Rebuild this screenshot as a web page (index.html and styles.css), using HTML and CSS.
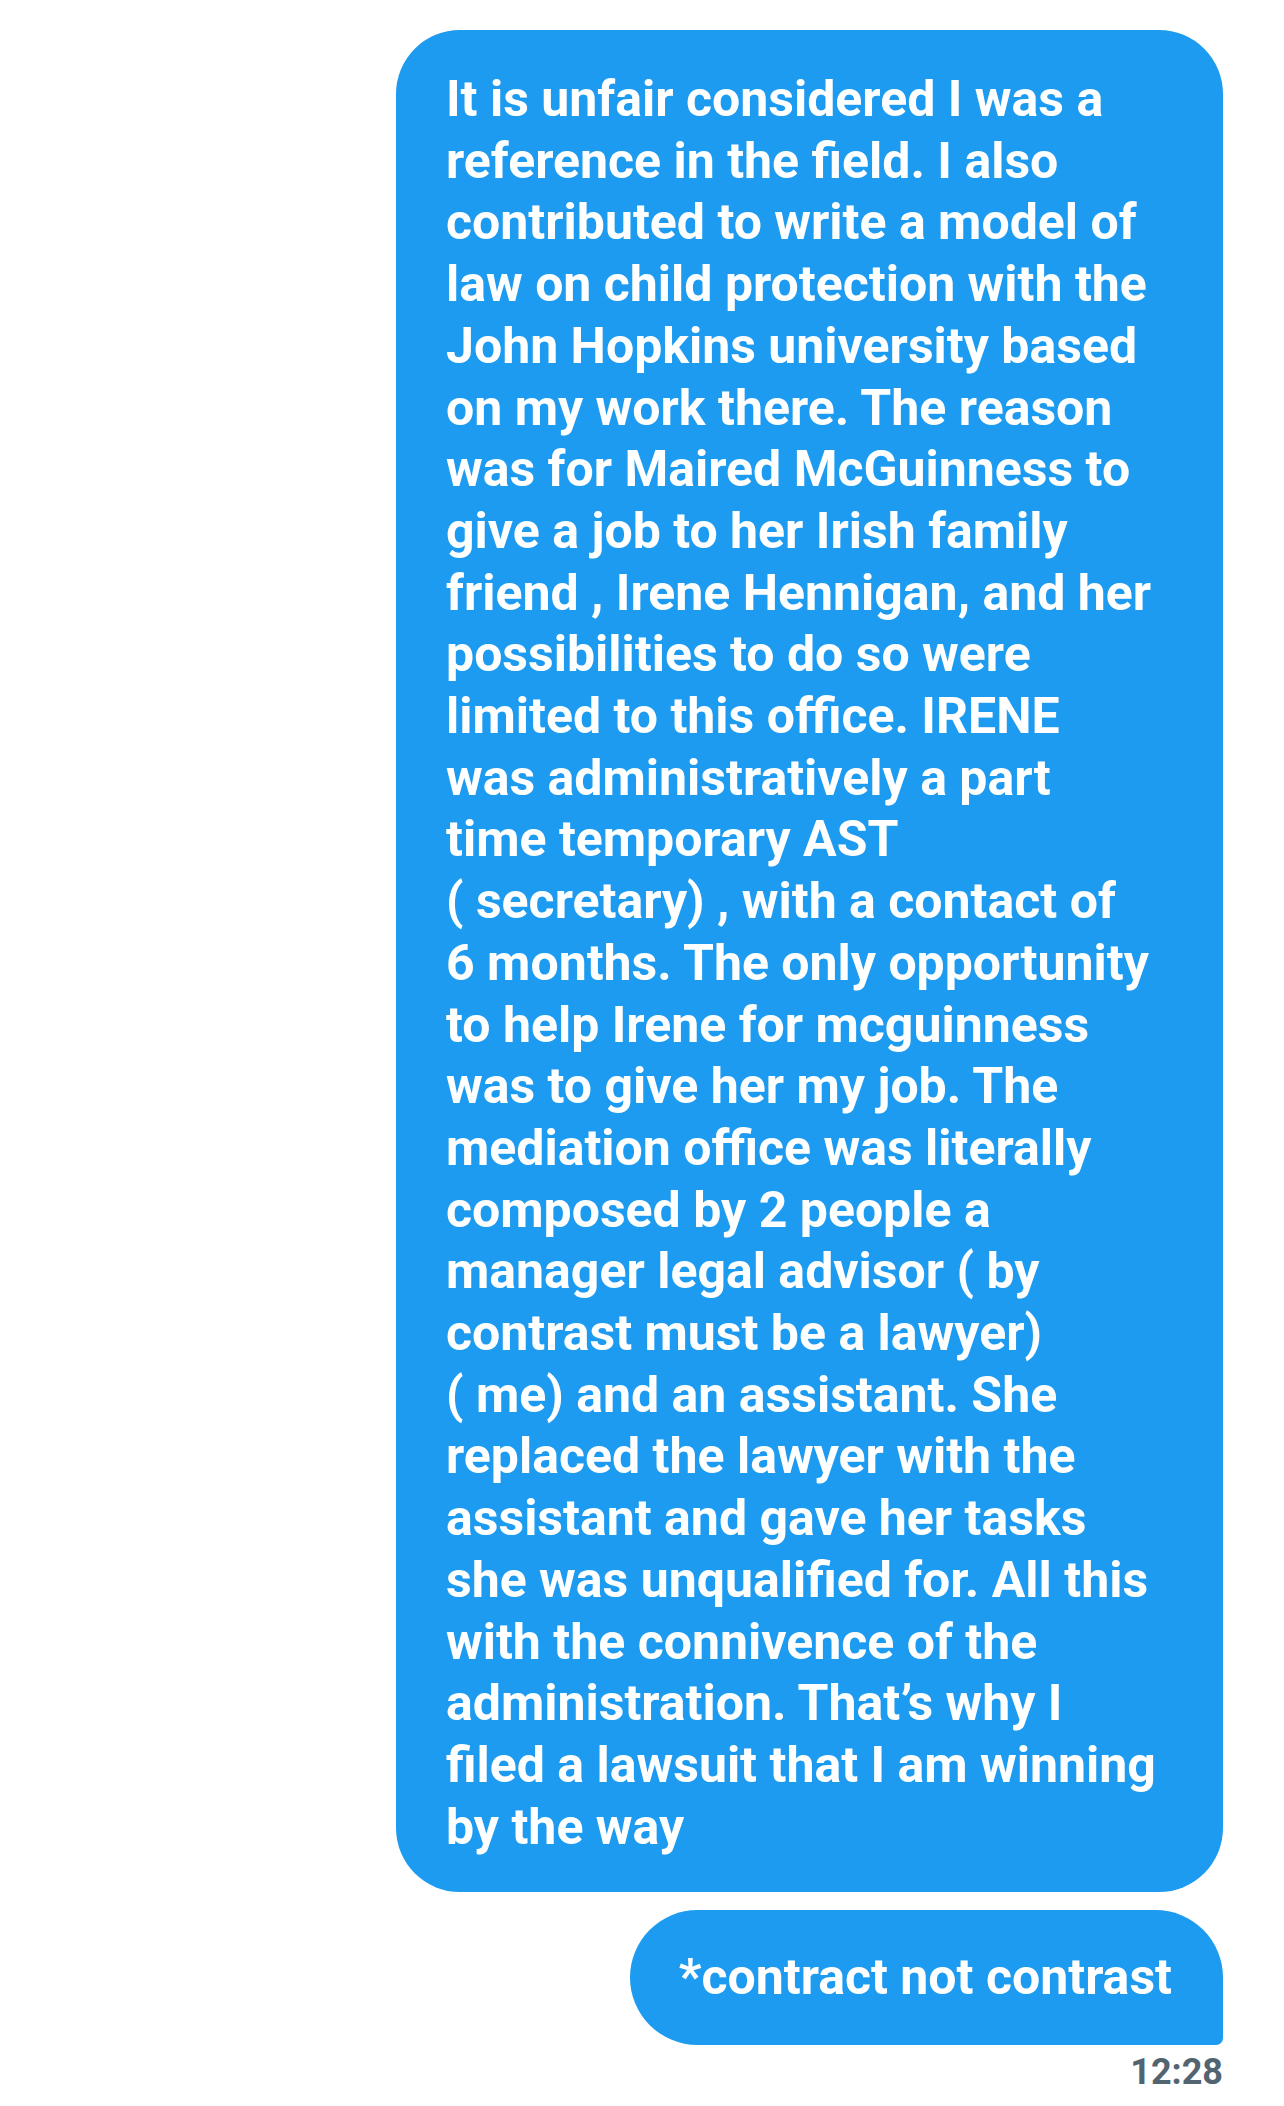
FILE: index.html
```html
<!DOCTYPE html>
<html>
<head>
<meta charset="utf-8">
<link rel="stylesheet" href="styles.css">
</head>
<body>
<div class="thread">
  <div class="bubble bubble-main">It is unfair considered I was a<br>reference in the field. I also<br>contributed to write a model of<br>law on child protection with the<br>John Hopkins university based<br>on my work there. The reason<br>was for Maired McGuinness to<br>give a job to her Irish family<br>friend , Irene Hennigan, and her<br>possibilities to do so were<br>limited to this office. IRENE<br>was administratively a part<br>time temporary AST<br>( secretary) , with a contact of<br>6 months. The only opportunity<br>to help Irene for mcguinness<br>was to give her my job. The<br>mediation office was literally<br>composed by 2 people a<br>manager legal advisor ( by<br>contrast must be a lawyer)<br>( me) and an assistant. She<br>replaced the lawyer with the<br>assistant and gave her tasks<br>she was unqualified for. All this<br>with the connivence of the<br>administration. That’s why I<br>filed a lawsuit that I am winning<br>by the way</div>
  <div class="bubble bubble-last">*contract not contrast</div>
  <div class="time">12:28</div>
</div>
</body>
</html>
```
FILE: styles.css
```css
html, body {
  margin: 0;
  padding: 0;
  background: #ffffff;
}
.thread {
  display: flex;
  flex-direction: column;
  align-items: flex-end;
  padding: 30px 61px 0 0;
  font-family: Roboto, "Noto Sans", sans-serif;
}
.bubble {
  background: #1d9bf0;
  color: #ffffff;
  font-weight: 700;
  font-size: 50px;
  line-height: 61.7px;
  white-space: nowrap;
  box-sizing: border-box;
}
.bubble-main {
  width: 827px;
  padding: 39px 50px 34px 50px;
  border-radius: 64px;
}
.bubble-last {
  margin-top: 18px;
  height: 135px;
  display: flex;
  align-items: center;
  padding: 0 51px 0 49px;
  border-radius: 68px 68px 7px 68px;
}
.time {
  margin-top: 7px;
  font-size: 36px;
  font-weight: 700;
  color: #536471;
  line-height: 40px;
}
```
